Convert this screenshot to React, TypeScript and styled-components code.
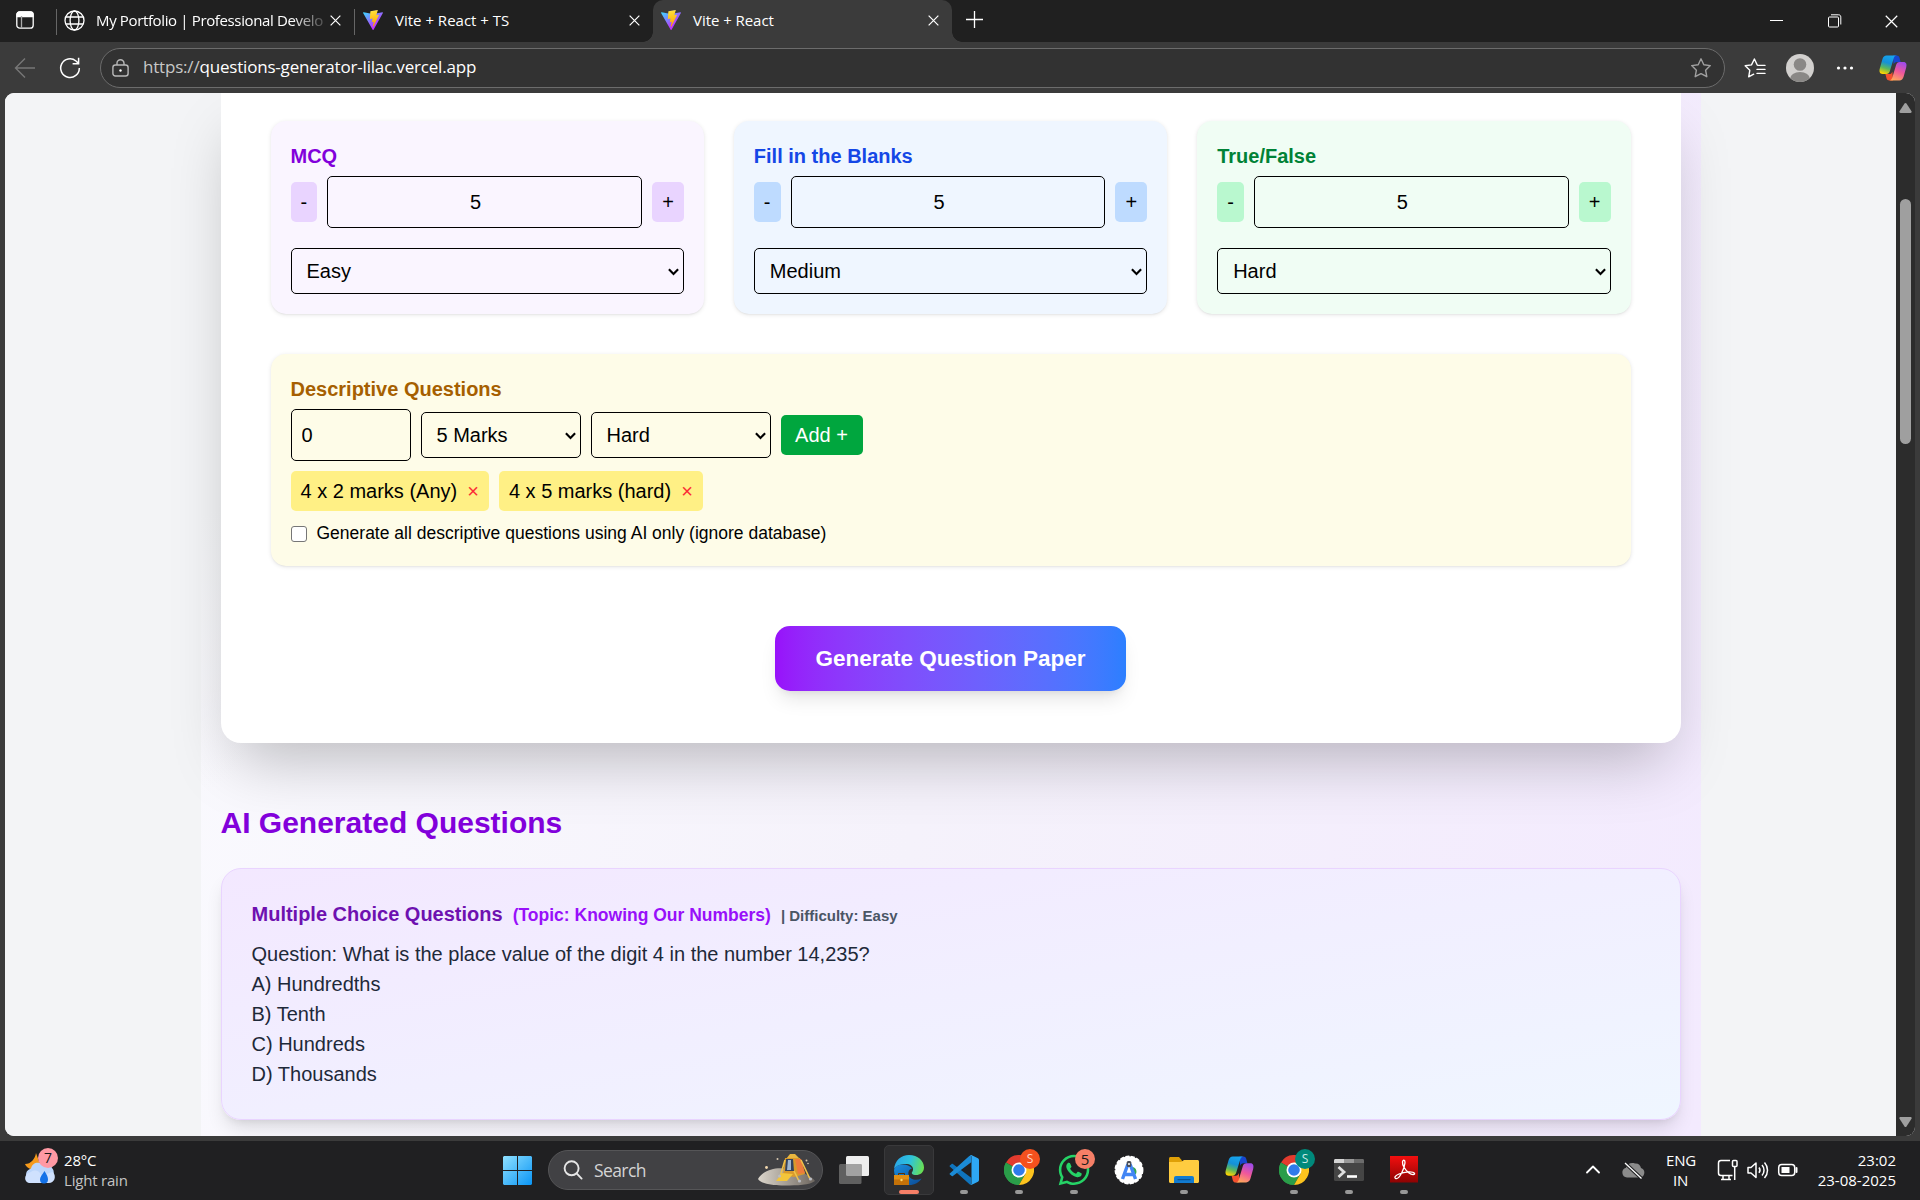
import React from 'react';
import styled, { createGlobalStyle } from 'styled-components';
import { FaWhatsapp } from 'react-icons/fa';

const ui = '"Open Sans", "Noto Sans", sans-serif';
const sans = '"Liberation Sans", Arial, sans-serif';

const Global = createGlobalStyle`
  *, *::before, *::after { box-sizing: border-box; }
  html, body { margin: 0; padding: 0; overflow: hidden; background: #3b3b3b; }
  svg { display: block; flex: none; }
`;

/* ---------- window frame ---------- */

const Desktop = styled.div`
  width: 1920px;
  height: 1200px;
  display: flex;
  flex-direction: column;
  overflow: hidden;
  background: #3b3b3b;
  font-family: ${ui};
`;

const TabStrip = styled.header`
  display: flex;
  height: 42px;
  flex: none;
  background: #202020;
  color: #fff;
`;

const TabActions = styled.div`
  width: 56px;
  padding-left: 16px;
  display: flex;
  align-items: center;
  padding-bottom: 2px;
`;

const Tab = styled.div<{ $width: number; $active?: boolean; $pad: number }>`
  position: relative;
  width: ${p => p.$width}px;
  display: flex;
  align-items: center;
  padding: 0 13px 2px ${p => p.$pad}px;
  border-radius: 10px 10px 0 0;
  background: ${p => (p.$active ? '#3b3b3b' : 'transparent')};
  ${p =>
    p.$active &&
    `&::before, &::after {
      content: '';
      position: absolute;
      bottom: 0;
      width: 10px;
      height: 10px;
    }
    &::before { left: -10px; background: radial-gradient(circle at 0 0, transparent 9.5px, #3b3b3b 10px); }
    &::after { right: -10px; background: radial-gradient(circle at 100% 0, transparent 9.5px, #3b3b3b 10px); }`}
`;

const TabDivider = styled.i`
  width: 1px;
  height: 26px;
  margin-top: 9px;
  background: #666;
`;

const TabTitle = styled.span<{ $gap: number; $spacing: number; $fade?: boolean }>`
  flex: 1;
  min-width: 0;
  margin-left: ${p => p.$gap}px;
  white-space: nowrap;
  font-size: 15px;
  line-height: 20px;
  letter-spacing: ${p => p.$spacing}px;
  ${p => p.$fade && 'mask-image: linear-gradient(90deg, #000 196px, rgba(0, 0, 0, 0.25) 224px);'}
`;

const NewTab = styled.div`
  margin-left: 14px;
  display: flex;
  align-items: center;
  padding-bottom: 3px;
`;

const WindowControls = styled.div`
  margin-left: auto;
  display: flex;
  align-items: center;
  gap: 43px;
  padding-right: 22px;
`;

const Toolbar = styled.div`
  height: 51px;
  flex: none;
  display: flex;
  align-items: center;
  padding: 0 13px 0 14px;
  background: #3b3b3b;
  color: #fff;
`;

const NavButtons = styled.div`
  width: 86px;
  display: flex;
  align-items: center;
  gap: 23px;
`;

const AddressBar = styled.div`
  width: 1625px;
  height: 40px;
  display: flex;
  align-items: center;
  padding: 0 12px 0 11px;
  border: 1px solid #6c6c6c;
  border-radius: 20px;
  background: #323232;
`;

const Url = styled.span`
  flex: 1;
  margin-left: 14px;
  font-size: 17px;
  letter-spacing: -0.19px;
  line-height: 24px;
  padding-bottom: 1px;
  em { font-style: normal; color: #c8c8c8; }
`;

const ToolbarEnd = styled.div`
  flex: 1;
  display: flex;
  align-items: center;
  gap: 20px;
  padding-left: 19px;
  & > :last-child { margin-left: auto; }
`;

const Viewport = styled.div`
  height: 1043px;
  margin: 0 5px;
  flex: none;
  display: flex;
  overflow: hidden;
  border-radius: 9px;
  background: #f3f4f6;
`;

const Page = styled.main`
  flex: 1;
  height: 1043px;
  overflow: hidden;
  background: #f3f4f6;
  font-family: ${sans};
  font-size: 20px;
  line-height: 30px;
  color: #000;
`;

const ScrollTrack = styled.div`
  width: 19px;
  display: flex;
  flex-direction: column;
  align-items: center;
  justify-content: space-between;
  padding: 10px 0 9px;
  background: #2c2c2c;
`;

const ScrollThumb = styled.div`
  width: 11px;
  height: 245px;
  margin: 86px 0 auto;
  border-radius: 6px;
  background: #9f9f9f;
`;

/* ---------- page ---------- */

const Container = styled.div`
  width: 1500px;
  height: 1043px;
  margin: 0 auto;
  padding: 0 20px;
  background:
    radial-gradient(ellipse 160px 700px at 0 0, #f3f4f6 60%, rgba(243, 244, 246, 0) 100%),
    linear-gradient(100deg, #fafafe 0%, #f5f2fb 50%, #f3eafe 100%);
`;

const FormCard = styled.section`
  height: 650px;
  padding: 28px 50px 0;
  border-radius: 0 0 20px 20px;
  background: #fff;
  box-shadow: 0 31px 62px -15px rgba(0, 0, 0, 0.25);
`;

const TypeGrid = styled.div`
  display: grid;
  grid-template-columns: repeat(3, 1fr);
  gap: 30px;
`;

const Panel = styled.div<{ $bg: string }>`
  padding: 20px;
  border-radius: 15px;
  background: ${p => p.$bg};
  box-shadow: 0 1px 4px rgba(0, 0, 0, 0.1), 0 1px 2px -1px rgba(0, 0, 0, 0.1);
`;

const DescriptivePanel = styled(Panel)`
  height: 212px;
  margin-top: 40px;
`;

const PanelTitle = styled.h3<{ $color: string }>`
  margin: 0 0 5px;
  font-size: 20px;
  line-height: 30px;
  font-weight: 700;
  color: ${p => p.$color};
`;

const Row = styled.div<{ $gapTop?: number }>`
  display: flex;
  align-items: center;
  gap: 10px;
  margin-top: ${p => p.$gapTop ?? 0}px;
`;

const StepButton = styled.button<{ $bg: string }>`
  height: 40px;
  padding: 0 10px;
  border: 0;
  border-radius: 5px;
  background: ${p => p.$bg};
  font: 20px/30px ${sans};
  color: #000;
`;

const NumberInput = styled.input<{ $width?: number }>`
  height: 52px;
  min-width: 0;
  ${p => (p.$width ? `width: ${p.$width}px; padding: 0 10px;` : 'flex: 1; padding: 0 28px 0 10px; text-align: center;')}
  border: 1px solid #000;
  border-radius: 5px;
  background: transparent;
  font: 20px/30px ${sans};
  color: #000;
`;

const SelectFrame = styled.div<{ $width?: number; $gapTop?: number }>`
  display: grid;
  align-items: center;
  width: ${p => (p.$width ? `${p.$width}px` : '100%')};
  margin-top: ${p => p.$gapTop ?? 0}px;
  & > * { grid-area: 1 / 1; }
  & > svg { justify-self: end; margin: 2px 5px 0 0; pointer-events: none; }
`;

const NativeSelect = styled.select`
  appearance: none;
  width: 100%;
  height: 46px;
  padding: 0 15px;
  border: 1px solid #000;
  border-radius: 5px;
  background: transparent;
  font: 20px/30px ${sans};
  color: #000;
`;

const AddButton = styled.button`
  width: 82px;
  height: 40px;
  padding: 0;
  border: 0;
  border-radius: 5px;
  background: #00a63e;
  color: #fff;
  font: 20px/30px ${sans};
`;

const Tag = styled.span`
  height: 40px;
  display: flex;
  align-items: center;
  gap: 10px;
  padding: 0 10px;
  border-radius: 5px;
  background: #fff085;
  b { font-weight: 400; font-size: 20px; color: #fb2c36; }
`;

const CheckLabel = styled.label`
  display: flex;
  align-items: center;
  gap: 10px;
  margin-top: 10px;
  font-size: 17.5px;
  line-height: 25px;
  height: 25px;
`;

const Checkbox = styled.input`
  appearance: none;
  width: 16px;
  height: 16px;
  margin: 0;
  border: 1px solid #767676;
  border-radius: 3px;
  background: #fff;
`;

const GenerateButton = styled.button`
  display: block;
  width: 351px;
  height: 65px;
  margin: 60px auto 0;
  padding: 0;
  border: 0;
  border-radius: 15px;
  background: linear-gradient(to right in oklab, #9810fa, #2b7fff);
  box-shadow: 0 12px 19px -4px rgba(0, 0, 0, 0.1), 0 5px 8px -5px rgba(0, 0, 0, 0.1);
  color: #fff;
  font: 700 22.5px/35px ${sans};
`;

const SectionTitle = styled.h2`
  margin: 60px 0 25px;
  font-size: 30px;
  line-height: 40px;
  font-weight: 700;
  color: #8200db;
`;

const QuestionCard = styled.article`
  height: 252px;
  padding: 30px;
  border: 1px solid #e9d4ff;
  border-radius: 20px;
  background: linear-gradient(to bottom right in oklab, #f3e8ff, #eff6ff);
  box-shadow: 0 12px 19px -4px rgba(0, 0, 0, 0.12), 0 5px 8px -5px rgba(0, 0, 0, 0.1);
  color: #1e2939;
  p { margin: 0; }
`;

const QuestionHead = styled.h4`
  display: flex;
  align-items: baseline;
  gap: 10px;
  margin: 0 0 10px;
  height: 30px;
  font-size: 20px;
  line-height: 30px;
  color: #6e11b0;
`;

const Topic = styled.span`
  font-size: 17.5px;
  color: #9810fa;
`;

const Difficulty = styled.span`
  font-size: 15px;
  color: #4a5565;
`;

/* ---------- taskbar ---------- */

const Taskbar = styled.footer`
  height: 59px;
  margin-top: 5px;
  flex: none;
  display: grid;
  grid-template-columns: 503px 1fr 334px;
  background: #202022;
  color: #fff;
`;

const Weather = styled.div`
  display: flex;
  padding: 4px 0 0 23px;
  gap: 7px;
`;

const TwoLines = styled.div<{ $align?: string; $muted?: boolean; $spacing?: number }>`
  font-size: 15px;
  line-height: 20px;
  letter-spacing: ${p => p.$spacing ?? -0.2}px;
  text-align: ${p => p.$align ?? 'left'};
  white-space: nowrap;
  padding-top: 5px;
  div + div { color: ${p => (p.$muted ? '#c4c4c4' : '#fff')}; }
`;

const Apps = styled.div`
  display: flex;
  align-items: flex-start;
`;

const StartButton = styled.div`
  width: 45px;
  padding-top: 15px;
`;

const SearchBox = styled.div`
  width: 275px;
  height: 40px;
  margin: 9px 6px 0 0;
  padding: 0 6px 0 14px;
  display: flex;
  align-items: center;
  border: 1px solid #555557;
  border-radius: 20px;
  background: #414144;
  color: #d4d4d4;
  font-size: 17.5px;
  letter-spacing: -0.6px;
  span { flex: 1; margin-left: 11px; }
`;

const AppTile = styled.div<{ $active?: boolean }>`
  position: relative;
  width: 50px;
  height: 50px;
  margin: 4px 5px 0 0;
  display: flex;
  flex-direction: column;
  align-items: center;
  padding-top: 9px;
  border-radius: 5px;
  border: 1px solid ${p => (p.$active ? '#39393b' : 'transparent')};
  background: ${p => (p.$active ? '#2d2d2f' : 'transparent')};
`;

const Running = styled.i<{ $active?: boolean }>`
  width: ${p => (p.$active ? 20 : 8)}px;
  height: 4px;
  margin-top: 5px;
  border-radius: 2px;
  background: ${p => (p.$active ? '#f67f67' : '#989898')};
`;

const Badge = styled.span<{ $bg: string; $fg: string; $size?: number }>`
  position: absolute;
  left: 25px;
  top: 3px;
  width: 20px;
  height: 20px;
  border-radius: 50%;
  display: grid;
  place-items: center;
  background: ${p => p.$bg};
  color: ${p => p.$fg};
  font-size: ${p => p.$size ?? 12}px;
  line-height: 20px;
`;

const WeatherIcon = styled.div`
  position: relative;
  width: 34px;
  height: 44px;
  ${Badge} { left: 15px; top: 3px; }
`;

const Tray = styled.div`
  display: flex;
  align-items: flex-start;
  padding-right: 24px;
  & > svg { margin-top: 17px; }
`;

const TrayText = styled.div<{ $width: number }>`
  width: ${p => p.$width}px;
  padding-top: 4px;
`;

/* ---------- icons ---------- */

const Cross = ({ size = 11, w = 1.3 }: { size?: number; w?: number }) => (
  <svg width={size} height={size} viewBox="0 0 12 12" stroke="#fff" strokeWidth={w} fill="none">
    <path d="M.7.7l10.6 10.6M11.3.7L.7 11.3" />
  </svg>
);

const ViteLogo = ({ id }: { id: string }) => (
  <svg width="20" height="20" viewBox="0 0 256 257">
    <defs>
      <linearGradient id={`${id}a`} x1="0%" x2="58%" y1="8%" y2="79%">
        <stop offset="0%" stopColor="#41D1FF" />
        <stop offset="100%" stopColor="#BD34FE" />
      </linearGradient>
      <linearGradient id={`${id}b`} x1="43%" x2="50%" y1="2%" y2="89%">
        <stop offset="0%" stopColor="#FFEA83" />
        <stop offset="8%" stopColor="#FFDD35" />
        <stop offset="100%" stopColor="#FFA800" />
      </linearGradient>
    </defs>
    <path fill={`url(#${id}a)`} d="M255.153 37.938L134.897 252.976c-2.483 4.44-8.862 4.466-11.382.048L.875 37.958c-2.746-4.814 1.371-10.646 6.827-9.67l120.385 21.517a6.537 6.537 0 0 0 2.322-.004l117.867-21.483c5.438-.991 9.574 4.796 6.877 9.62Z" />
    <path fill={`url(#${id}b)`} d="M185.432.063L96.44 17.501a3.268 3.268 0 0 0-2.634 3.014l-5.474 92.456a3.268 3.268 0 0 0 3.997 3.378l24.777-5.718c2.318-.535 4.413 1.507 3.936 3.838l-7.361 36.047c-.495 2.426 1.782 4.5 4.151 3.78l15.304-4.649c2.372-.72 4.652 1.36 4.15 3.788l-11.698 56.621c-.732 3.542 3.979 5.473 5.943 2.437l1.313-2.028l72.516-144.72c1.215-2.423-.88-5.186-3.54-4.672l-25.505 4.922c-2.396.462-4.435-1.77-3.759-4.114l16.646-57.705c.677-2.35-1.37-4.583-3.769-4.113Z" />
  </svg>
);

const CopilotLogo = ({ id, size = 28 }: { id: string; size?: number }) => (
  <svg width={size} height={size} viewBox="0 0 28 28">
    <defs>
      <linearGradient id={`${id}l`} x1=".6" y1="0" x2=".3" y2="1">
        <stop offset="0" stopColor="#16a5ee" />
        <stop offset=".4" stopColor="#1590d8" />
        <stop offset=".7" stopColor="#5bb85c" />
        <stop offset="1" stopColor="#ffd400" />
      </linearGradient>
      <linearGradient id={`${id}r`} x1=".7" y1="0" x2=".3" y2="1">
        <stop offset="0" stopColor="#a04be8" />
        <stop offset=".5" stopColor="#f0589a" />
        <stop offset="1" stopColor="#ffa95a" />
      </linearGradient>
    </defs>
    <path d="M14 1.500h3.600c1.500 0 2.400.8 2.900 2.200l1.100 4.200h-3.700c-1.800 0-2.800 1-3.300 2.600z" fill="#1746cf" />
    <path d="M14 26.500h-3.600c-1.500 0-2.400-.8-2.900-2.200L6.400 20h3.700c1.800 0 2.800-1 3.300-2.600z" fill="#f4502e" />
    <path d="M7.500 1.500H18c-2 0-2.800 1.200-3.400 3.200l-3.700 12.300c-.6 2-1.700 3-3.700 3H3.500C.7 20 0 17.600.8 14.600L3.400 5.200C4.100 2.800 5.500 1.500 7.500 1.500z" fill={`url(#${id}l)`} />
    <path d="M20.500 26.500H10c2 0 2.800-1.200 3.400-3.200L17.100 11c.6-2 1.700-3 3.700-3h3.700c2.800 0 3.500 2.400 2.700 5.400l-2.600 9.400c-.7 2.400-2.100 3.700-4.100 3.700z" fill={`url(#${id}r)`} />
  </svg>
);

const ChromeLogo = () => (
  <svg width="30" height="30" viewBox="0 0 48 48">
    <path d="M24 24L3.200 12A24 24 0 0 1 44.800 12z" fill="#e33b2e" />
    <path d="M24 24L3.200 12A24 24 0 0 0 24 48z" fill="#2a9d49" />
    <path d="M13.600 30L3.200 12A24 24 0 0 0 24 48l10.400-18z" fill="#2a9d49" />
    <path d="M24 12h20.800A24 24 0 0 1 24 48l10.400-18z" fill="#fcc31e" />
    <circle cx="24" cy="24" r="12" fill="#fff" />
    <circle cx="24" cy="24" r="9.300" fill="#2f7bea" />
  </svg>
);

const EdgeLogo = () => (
  <svg width="30" height="30" viewBox="0 0 30 30">
    <defs>
      <linearGradient id="edgeTop" x1="0" y1=".4" x2="1" y2=".6">
        <stop offset="0" stopColor="#2aa6e8" />
        <stop offset=".5" stopColor="#2ec3dc" />
        <stop offset="1" stopColor="#6be04f" />
      </linearGradient>
      <linearGradient id="edgeLow" x1="0" y1="0" x2="1" y2="1">
        <stop offset="0" stopColor="#1a8fe0" />
        <stop offset="1" stopColor="#0b4a94" />
      </linearGradient>
    </defs>
    <path d="M0 15c0 9 7 15 15 15 6 0 10-2.500 12.500-6.500-5 2.500-12 1.500-13-4-.6-3 1-5.500 3.500-6C14 8 2 8 0 15z" fill="url(#edgeLow)" />
    <path d="M0 14C1 5.500 7 0 15 0c9 0 15 6 15 12.500 0 5-4 7.500-8 7.500-3.500 0-5-1.500-3.800-3 2.200-3 .3-7.500-5.200-8C7.500 8.500 2 10.500 0 14z" fill="url(#edgeTop)" />
    <path d="M0 20h15v10H0z" fill="#c37108" />
    <path d="M0 20h15v4.500H0z" fill="#e08f14" />
    <path d="M4.500 20v-1.500h6V20" stroke="#5a3205" fill="none" />
    <circle cx="7.500" cy="25" r="1.200" fill="#ffd76a" />
  </svg>
);

const CodeLogo = () => (
  <svg width="30" height="30" viewBox="0 0 100 100">
    <path d="M3 35l5-4.500c1.500-1.300 3.500-1.400 5-.3L74 76v22c-2.500 1-4.500.3-6.500-1.500L2.500 38.500C1.300 37.400 1.300 36 3 35z" fill="#0f74bd" />
    <path d="M3 65l5 4.500c1.500 1.300 3.500 1.400 5 .3L74 24V2c-2.500-1-4.500-.3-6.500 1.500L2.500 61.500C1.300 62.600 1.300 64 3 65z" fill="#1b8bd6" />
    <path d="M70 99c2 1 4 1 6 0l20.500-10c2.200-1 3.500-3.200 3.500-5.600V16.600c0-2.400-1.300-4.600-3.500-5.600L76 1c-2-1-4.500-.8-6.500.7C72 .5 75 2 75 5v90c0 3-2.500 4.800-5 4z" fill="#2ea8f5" />
  </svg>
);

const StarIcon = ({ lines }: { lines?: boolean }) => (
  <svg width="22" height="22" viewBox="0 0 22 22" fill="none" stroke={lines ? '#fff' : '#a0a0a0'} strokeWidth="1.400" strokeLinejoin="round" strokeLinecap="round">
    {lines ? (
      <path d="M13.200 8l-2.800-6L7.500 7.900 1.200 8.800l4.600 4.500-1.100 6.500 5-2.600M14 8.400h7M13 12.400h8M13 16.400h8" />
    ) : (
      <path d="M11 1.800l2.800 5.900 6.500.9-4.700 4.600 1.200 6.500L11 16.600l-5.800 3.100 1.200-6.500L1.700 8.600l6.500-.9z" />
    )}
  </svg>
);

const Chevron = () => (
  <svg width="11" height="8" viewBox="0 0 11 8" fill="none" stroke="#000" strokeWidth="2.100">
    <path d="M.9 1.200L5.500 6l4.600-4.800" />
  </svg>
);

const Lander = () => (
  <svg width="58" height="32" viewBox="0 0 58 32">
    <defs>
      <linearGradient id="moon" x1="0" x2="1">
        <stop offset="0" stopColor="#dcd6cc" />
        <stop offset="1" stopColor="#6d665f" />
      </linearGradient>
    </defs>
    <path d="M0 25C6 15 20 13 29 15c12 1 25 7 28 12-5 4-18 4.500-30 4.500S3 30 0 25z" fill="url(#moon)" />
    <circle cx="8.500" cy="13.500" r="1.400" fill="#f2d8ae" />
    <circle cx="19.500" cy="5" r="1" fill="#d8c8b0" />
    <circle cx="48.500" cy="6.500" r="1" fill="#d8c8b0" />
    <circle cx="50" cy="9.500" r=".8" fill="#d8c8b0" />
    <path d="M28 5l4-5h5l5 5z" fill="#e9b63f" />
    <path d="M27 4h15l5 16-11 3-11-2z" fill="#d99a2b" />
    <path d="M37 5l6 0 4 14-7 1z" fill="#ee7b3b" />
    <path d="M28 5h7l1 12h-9z" fill="#33435e" />
    <path d="M30 6h3v10h-4z" fill="#9fb6cf" />
    <path d="M24 19l11 1-6 7H18z" fill="#f3c53a" />
    <path d="M27 6l-5 17M43 6l9 19M36 17l5 10" stroke="#f0c24a" strokeWidth="1.600" fill="none" />
    <circle cx="52.500" cy="25" r="1.600" fill="#b9bcc4" />
    <circle cx="41.500" cy="27" r="1.600" fill="#b9bcc4" />
    <circle cx="21.500" cy="22" r="1.500" fill="#b9bcc4" />
  </svg>
);

/* ---------- data ---------- */

const questionTypes = [
  { title: 'MCQ', level: 'Easy', bg: '#faf5ff', color: '#8200db', step: '#e9d4ff' },
  { title: 'Fill in the Blanks', level: 'Medium', bg: '#eff6ff', color: '#1447e6', step: '#bedbff' },
  { title: 'True/False', level: 'Hard', bg: '#f0fdf4', color: '#008236', step: '#b9f8cf' },
];

const answers = ['A) Hundredths', 'B) Tenth', 'C) Hundreds', 'D) Thousands'];

const Select = ({ value, width, gapTop }: { value: string; width?: number; gapTop?: number }) => (
  <SelectFrame $width={width} $gapTop={gapTop}>
    <NativeSelect defaultValue={value}>
      <option>{value}</option>
    </NativeSelect>
    <Chevron />
  </SelectFrame>
);

export default function App() {
  return (
    <Desktop>
      <Global />
      <TabStrip>
        <TabActions>
          <svg width="18" height="18" viewBox="0 0 18 18" fill="none" stroke="#fff" strokeWidth="1.300">
            <rect x=".8" y=".8" width="16.400" height="16.400" rx="3" />
            <path d="M1 3.500C1 2 2 1 3.500 1h11C16 1 17 2 17 3.500V5.500H1z" fill="#fff" />
            <path d="M5.500 5v12" stroke="#aaa" />
          </svg>
        </TabActions>
        <TabDivider />
        <Tab $width={297} $pad={7}>
          <svg width="21" height="21" viewBox="0 0 21 21" fill="none" stroke="#fff" strokeWidth="1.300">
            <circle cx="10.500" cy="10.500" r="9.500" />
            <ellipse cx="10.500" cy="10.500" rx="4.400" ry="9.500" />
            <path d="M1.800 7h17.400M1.800 14h17.400" />
          </svg>
          <TabTitle $gap={11} $spacing={-0.36} $fade>My Portfolio | Professional Develo</TabTitle>
          <Cross />
        </Tab>
        <TabDivider />
        <Tab $width={298} $pad={8}>
          <ViteLogo id="v1" />
          <TabTitle $gap={12} $spacing={0}>Vite + React + TS</TabTitle>
          <Cross />
        </Tab>
        <Tab $width={299} $pad={8} $active>
          <ViteLogo id="v2" />
          <TabTitle $gap={12} $spacing={-0.05}>Vite + React</TabTitle>
          <Cross />
        </Tab>
        <NewTab>
          <svg width="17" height="17" viewBox="0 0 17 17" stroke="#fff" strokeWidth="1.300">
            <path d="M8.500 0v17M0 8.500h17" />
          </svg>
        </NewTab>
        <WindowControls>
          <svg width="15" height="14" viewBox="0 0 15 14" stroke="#fff" strokeWidth="1">
            <path d="M1 6.500h13" />
          </svg>
          <svg width="15" height="14" viewBox="0 0 15 14" fill="none" stroke="#fff" strokeWidth="1">
            <rect x="1.500" y="3" width="10" height="10" rx="1" />
            <path d="M4 .8h7.500c1.500 0 2.300.8 2.300 2.300V10.500" />
          </svg>
          <Cross size={13} w={1.1} />
        </WindowControls>
      </TabStrip>

      <Toolbar>
        <NavButtons>
          <svg width="22" height="22" viewBox="0 0 22 22" fill="none" stroke="#777" strokeWidth="1.400">
            <path d="M21 11H1.500M11 1.500L1.500 11l9.500 9.500" />
          </svg>
          <svg width="22" height="22" viewBox="0 0 22 22" fill="none" stroke="#fff" strokeWidth="1.500">
            <path d="M20.300 11A9.300 9.300 0 1 1 17 4l2.300 2.300M19.600.8v6h-6" />
          </svg>
        </NavButtons>
        <AddressBar>
          <svg width="17" height="18" viewBox="0 0 17 18" fill="none" stroke="#b8b8b8" strokeWidth="1.400">
            <rect x=".9" y="6" width="15.200" height="11" rx="2.500" />
            <path d="M5 6V4.300a3.500 3.500 0 0 1 7 0V6" />
            <circle cx="8.500" cy="11.500" r="1.200" fill="#fff" stroke="none" />
          </svg>
          <Url><em>https://</em>questions-generator-lilac.vercel.app</Url>
          <StarIcon />
        </AddressBar>
        <ToolbarEnd>
          <StarIcon lines />
          <svg width="28" height="28" viewBox="0 0 28 28">
            <clipPath id="avatar"><circle cx="14" cy="14" r="14" /></clipPath>
            <g clipPath="url(#avatar)">
              <path d="M0 0h28v28H0z" fill="#d2d0ce" />
              <circle cx="14" cy="10.500" r="6.300" fill="#8a8886" />
              <ellipse cx="14" cy="25" rx="10" ry="7" fill="#8a8886" />
            </g>
          </svg>
          <svg width="22" height="4" viewBox="-2 0 22 4" fill="#fff">
            <circle cx="2.500" cy="2" r="1.600" />
            <circle cx="9" cy="2" r="1.600" />
            <circle cx="15.500" cy="2" r="1.600" />
          </svg>
          <CopilotLogo id="cp1" />
        </ToolbarEnd>
      </Toolbar>

      <Viewport>
        <Page>
          <Container>
            <FormCard>
              <TypeGrid>
                {questionTypes.map(t => (
                  <Panel key={t.title} $bg={t.bg}>
                    <PanelTitle $color={t.color}>{t.title}</PanelTitle>
                    <Row>
                      <StepButton $bg={t.step}>-</StepButton>
                      <NumberInput defaultValue="5" />
                      <StepButton $bg={t.step}>+</StepButton>
                    </Row>
                    <Select value={t.level} gapTop={20} />
                  </Panel>
                ))}
              </TypeGrid>
              <DescriptivePanel $bg="#fefce8">
                <PanelTitle $color="#a65f00">Descriptive Questions</PanelTitle>
                <Row>
                  <NumberInput $width={120} defaultValue="0" />
                  <Select value="5 Marks" width={160} />
                  <Select value="Hard" width={180} />
                  <AddButton>Add +</AddButton>
                </Row>
                <Row $gapTop={10}>
                  <Tag>4 x 2 marks (Any)<b>×</b></Tag>
                  <Tag>4 x 5 marks (hard)<b>×</b></Tag>
                </Row>
                <CheckLabel>
                  <Checkbox type="checkbox" />
                  Generate all descriptive questions using AI only (ignore database)
                </CheckLabel>
              </DescriptivePanel>
              <GenerateButton>Generate Question Paper</GenerateButton>
            </FormCard>
            <SectionTitle>AI Generated Questions</SectionTitle>
            <QuestionCard>
              <QuestionHead>
                Multiple Choice Questions
                <Topic>(Topic: Knowing Our Numbers)</Topic>
                <Difficulty>| Difficulty: Easy</Difficulty>
              </QuestionHead>
              <p>Question: What is the place value of the digit 4 in the number 14,235?</p>
              {answers.map(a => <p key={a}>{a}</p>)}
            </QuestionCard>
          </Container>
        </Page>
        <ScrollTrack>
          <svg width="13" height="10" viewBox="0 0 13 10" fill="#9f9f9f">
            <path d="M5.500.6c.5-.7 1.500-.7 2 0l5 7.600c.4.8 0 1.800-1 1.800h-10c-1 0-1.400-1-1-1.800z" />
          </svg>
          <ScrollThumb />
          <svg width="13" height="10" viewBox="0 0 13 10" fill="#9f9f9f">
            <path d="M5.500 9.400c.5.700 1.500.7 2 0l5-7.600c.4-.8 0-1.800-1-1.800h-10C.5 0 .1 1 .5 1.800z" />
          </svg>
        </ScrollTrack>
      </Viewport>

      <Taskbar>
        <Weather>
          <WeatherIcon>
            <svg width="34" height="44" viewBox="0 0 34 44">
              <path d="M13 8c-1 6-5 11-11 11 2 5 10 8 16 3z" fill="#f59a1b" />
              <path d="M9 38a7.500 7.500 0 0 1-1-14.500C9 18.500 13 17 17 18c5-2 11 0 12 5 3 3 2 8-2 10z" fill="#bcd6fb" />
              <path d="M8 27c4-3 9-1 10 3 3 1 7-2 12-3 4 5 1 11-4 11H7c-6 0-7-9 1-11z" fill="#cfe1fe" />
              <path d="M21.500 26c2.500 4 3.500 6 3.500 8.500a4 4 0 0 1-8 0c0-2.500 2-4.500 4.500-8.500z" fill="#1271e8" />
            </svg>
            <Badge $bg="#ff99a4" $fg="#1a1a1a" $size={14}>7</Badge>
          </WeatherIcon>
          <TwoLines $muted>
            <div>28°C</div>
            <div>Light rain</div>
          </TwoLines>
        </Weather>
        <Apps>
          <StartButton>
            <svg width="29" height="29" viewBox="0 0 29 29">
              <defs>
                <linearGradient id="win" x1="0" y1="0" x2="29" y2="29" gradientUnits="userSpaceOnUse">
                  <stop offset="0" stopColor="#8fe0ff" />
                  <stop offset="1" stopColor="#0a95f5" />
                </linearGradient>
              </defs>
              <path d="M1 0h13v14H0V1zM15 0h13l1 1v13H15zM0 15h14v14H1l-1-1zM15 15h14v13l-1 1H15z" fill="url(#win)" />
            </svg>
          </StartButton>
          <SearchBox>
            <svg width="20" height="20" viewBox="0 0 20 20" fill="none" stroke="#e6e6e6" strokeWidth="1.900" strokeLinecap="round">
              <circle cx="8.600" cy="8.300" r="7" />
              <path d="M13.600 13.400l5 5.200" />
            </svg>
            <span>Search</span>
            <Lander />
          </SearchBox>
          <AppTile>
            <svg width="30" height="30" viewBox="0 0 30 30">
              <rect x="7" y="1" width="23" height="20" rx="1.500" fill="#eee" />
              <rect x="0" y="9" width="22.500" height="20" rx="1.500" fill="#606060" />
              <path d="M7 9h15.500v12H8.500A1.500 1.500 0 0 1 7 19.500z" fill="#a2a2a2" />
            </svg>
          </AppTile>
          <AppTile $active><EdgeLogo /><Running $active /></AppTile>
          <AppTile><CodeLogo /><Running /></AppTile>
          <AppTile>
            <ChromeLogo /><Running />
            <Badge $bg="#f4511e" $fg="#ffd9cc">S</Badge>
          </AppTile>
          <AppTile>
            <svg width="30" height="30" viewBox="0 0 30 30" overflow="visible">
              <FaWhatsapp x="-2.500" y="-2.500" width="35" height="35" size={35} color="#25d366" />
            </svg>
            <Running />
            <Badge $bg="#f67f67" $fg="#1a1a1a" $size={15}>5</Badge>
          </AppTile>
          <AppTile>
            <svg width="30" height="30" viewBox="0 0 30 30">
              <circle cx="15" cy="15" r="13.700" fill="#fff" stroke="#fff" strokeWidth="1.500" strokeDasharray="4 1.500" />
              <path d="M18 12a4.500 4.500 0 0 1 2 8.500z" fill="#34a853" />
              <path d="M14 9L8.500 24M16 9l5.500 15M10 19.500h10" fill="none" stroke="#4285f4" strokeWidth="3.400" />
              <rect x="12.700" y="6" width="4.600" height="6" rx="1.500" fill="#4a4f5a" />
              <circle cx="15" cy="9" r="1" fill="#fff" />
            </svg>
          </AppTile>
          <AppTile>
            <svg width="30" height="30" viewBox="0 0 30 30">
              <path d="M0 3.500C0 2.700.7 2 1.500 2H10l3 3.500V10H0z" fill="#dfa007" />
              <path d="M0 7h12l3-2h13.500c.8 0 1.500.7 1.500 1.500v20c0 .8-.7 1.500-1.500 1.500h-27C.7 28 0 27.300 0 26.500z" fill="#ffcc40" />
              <path d="M5 28v-5a2 2 0 0 1 2-2h16a2 2 0 0 1 2 2v5z" fill="#127bd0" />
              <path d="M8.500 24.700h13" stroke="#0a4a86" />
            </svg>
            <Running />
          </AppTile>
          <AppTile><CopilotLogo id="cp2" size={29} /></AppTile>
          <AppTile>
            <ChromeLogo /><Running />
            <Badge $bg="#00897b" $fg="#c9e8e4">S</Badge>
          </AppTile>
          <AppTile>
            <svg width="30" height="30" viewBox="0 0 30 30">
              <rect y="4" width="30" height="22" rx="1.500" fill="#454545" />
              <path d="M0 5.500C0 4.700.7 4 1.500 4H10v4H0z" fill="#d4d4d4" />
              <path d="M10 4h10v4H10z" fill="#999" />
              <path d="M20 4h8.500c.8 0 1.500.7 1.500 1.500V8H20z" fill="#6c6c6c" />
              <path d="M4.500 12l5.500 5-5.500 5" fill="none" stroke="#e0e0e0" strokeWidth="2.800" />
              <path d="M13 21.500h10" stroke="#fff" strokeWidth="2.600" />
            </svg>
            <Running />
          </AppTile>
          <AppTile>
            <svg width="30" height="30" viewBox="0 0 30 30">
              <defs>
                <linearGradient id="pdf" x2="0" y2="1">
                  <stop offset="0" stopColor="#f30f0f" />
                  <stop offset="1" stopColor="#8d0303" />
                </linearGradient>
              </defs>
              <rect x="1" y="1" width="28" height="26.500" fill="url(#pdf)" />
              <path d="M6.500 23.500c-1.500-1 0-3 3.500-4.500 6-2.600 14-3 15.500-.7.800 1.800-2.800 1.700-5.500-.3-4-3-6.800-8-6.500-11 .3-2.600 2.700-2.300 2.500.7-.3 4.800-5.500 17.500-9.500 15.800z" fill="none" stroke="#fff" strokeWidth="1.300" />
            </svg>
            <Running />
          </AppTile>
        </Apps>
        <Tray>
          <svg width="14" height="24" viewBox="0 0 14 24" fill="none" stroke="#fff" strokeWidth="1.800" strokeLinecap="round" strokeLinejoin="round">
            <path d="M1 14.500l6-6 6 6" />
          </svg>
          <svg width="66" height="24" viewBox="1 0 66 24">
            <path d="M28 19.500a5 5 0 0 1-1-9.800C28 6 32 4 36 5.500c3-.5 5.500 1.500 6 4.500 4.500 1 4.500 8 0 9.500z" fill="#8b8b8b" />
            <path d="M26 5l16.500 15.500" stroke="#202022" strokeWidth="3.500" />
            <path d="M26 5l16.500 15.500" stroke="#fff" strokeWidth="1.300" />
          </svg>
          <TrayText $width={29}>
            <TwoLines $align="center" $spacing={-0.2}>
              <div>ENG</div>
              <div>IN</div>
            </TwoLines>
          </TrayText>
          <svg width="103" height="24" viewBox="0 0 103 24" fill="none" stroke="#fff" strokeWidth="1.500">
            <path d="M35 2.500H26a2.500 2.500 0 0 0-2.500 2.500v10A2.500 2.500 0 0 0 26 17.500h11.500M28 17.500v4M34 17.500v4M26 21.500h10" />
            <rect x="37.500" y="2.500" width="4.500" height="6" rx="1" />
            <path d="M39.700 8.500v13.500" />
            <path d="M53 9.500h3l5-4.500v14.500l-5-4.500h-3z" strokeLinejoin="round" />
            <path d="M64 9.500c1.300 1.700 1.300 3.700 0 5.400M67 7c2.700 3 2.700 7.500 0 10.500M69.500 4.500c4 4.500 4 11 0 15.500" />
            <rect x="83.700" y="6.500" width="16" height="11" rx="3" />
            <path d="M86.500 9h8v6h-8z" fill="#fff" stroke="none" />
            <path d="M101.500 10v4" strokeWidth="2" strokeLinecap="round" />
          </svg>
          <TrayText $width={98}>
            <TwoLines $align="right" $spacing={0}>
              <div>23:02</div>
              <div>23-08-2025</div>
            </TwoLines>
          </TrayText>
        </Tray>
      </Taskbar>
    </Desktop>
  );
}
